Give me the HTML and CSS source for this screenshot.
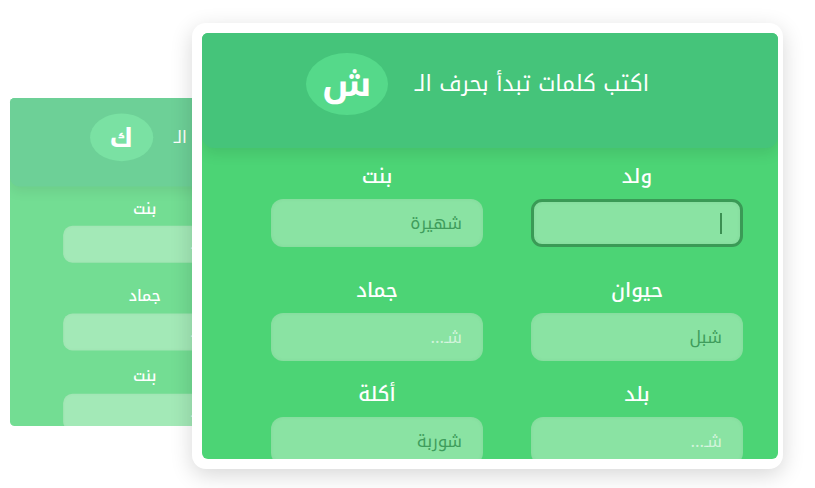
FILE: index.html
```html
<!DOCTYPE html>
<html lang="ar">
<head>
<meta charset="utf-8">
<link rel="stylesheet" href="styles.css">
</head>
<body>
<div class="stage">
  <div class="back">
    <div class="panel">
      <div class="head">
        <div class="title">اكتب كلمات تبدأ بحرف الـ</div>
        <div class="badge">ك</div>
      </div>
      <div class="form">
        <div class="field r1"><div class="label">&nbsp;</div><div class="input"></div></div>
        <div class="field r1"><div class="label">بنت</div><div class="input"><span class="ph">كـ...</span></div></div>
        <div class="field"><div class="label">&nbsp;</div><div class="input"></div></div>
        <div class="field"><div class="label">جماد</div><div class="input"><span class="ph">كـ...</span></div></div>
        <div class="field"><div class="label">&nbsp;</div><div class="input"></div></div>
        <div class="field"><div class="label">بنت</div><div class="input"><span class="ph">كـ...</span></div></div>
      </div>
    </div>
  </div>

  <div class="frame">
    <div class="panel">
      <div class="head">
        <div class="title">اكتب كلمات تبدأ بحرف الـ</div>
        <div class="badge">ش</div>
      </div>
      <div class="form">
        <div class="field r1"><div class="label">ولد</div><div class="input focus"><span class="caret"></span></div></div>
        <div class="field r1"><div class="label">بنت</div><div class="input"><span class="val">شهيرة</span></div></div>
        <div class="field"><div class="label">حيوان</div><div class="input"><span class="val">شبل</span></div></div>
        <div class="field"><div class="label">جماد</div><div class="input"><span class="ph">شـ...</span></div></div>
        <div class="field"><div class="label">بلد</div><div class="input"><span class="ph">شـ...</span></div></div>
        <div class="field"><div class="label">أكلة</div><div class="input"><span class="val">شوربة</span></div></div>
      </div>
    </div>
  </div>
</div>
</body>
</html>
```
FILE: styles.css
```css
* { box-sizing: border-box; }
html, body { margin: 0; padding: 0; background: #ffffff; }
body {
  font-family: "Noto Kufi Arabic", "Noto Sans Arabic", "DejaVu Sans", sans-serif;
}
.stage {
  position: relative;
  width: 815px;
  height: 488px;
  overflow: hidden;
}
.back {
  position: absolute;
  left: 10px;
  top: 98px;
  transform: scale(0.77);
  transform-origin: top left;
  opacity: 0.78;
}
.frame {
  position: absolute;
  left: 192px;
  top: 23px;
  width: 591px;
  height: 446px;
  padding: 10px 5px 10px 10px;
  background: #ffffff;
  border-radius: 14px;
  box-shadow: 0 6px 22px rgba(0, 0, 0, 0.16);
}
.panel {
  width: 576px;
  height: 426px;
  background: #4cd475;
  border-radius: 6px;
  overflow: hidden;
  direction: rtl;
}
.head {
  position: relative;
  z-index: 1;
  height: 115px;
  background: #45c47a;
  border-radius: 0 0 12px 12px;
  box-shadow: 0 6px 14px rgba(0, 0, 0, 0.09);
  display: flex;
  align-items: center;
  gap: 27px;
  padding: 20px 129px 33px 0;
}
.title {
  color: #ffffff;
  font-size: 22px;
  line-height: 30px;
  white-space: nowrap;
}
.badge {
  width: 82px;
  height: 62px;
  flex: none;
  border-radius: 50%;
  background: #55d98a;
  color: #ffffff;
  font-size: 35px;
  font-weight: 700;
  line-height: 1;
  display: flex;
  align-items: center;
  justify-content: center;
}
.form {
  display: grid;
  grid-template-columns: 212px 212px;
  column-gap: 48px;
  row-gap: 21px;
  padding: 16px 35px 0 0;
}
.field.r1 { margin-bottom: 10px; }
.label {
  text-align: center;
  color: #ffffff;
  font-size: 20px;
  line-height: 24px;
  font-weight: 500;
  margin-bottom: 11px;
}
.input {
  height: 48px;
  border-radius: 12px;
  background: #8ae3a3;
  box-shadow: inset 0 0 4px rgba(0, 0, 0, 0.05);
  display: flex;
  align-items: center;
  padding: 0 21px;
  font-size: 17px;
}
.input.focus {
  border: 3px solid #3a9a56;
  border-radius: 11px;
  padding: 0 18px;
}
.caret {
  width: 2px;
  height: 21px;
  background: #3b8f52;
}
.val { color: #3f9d5c; }
.ph { color: rgba(255, 255, 255, 0.62); }
```
